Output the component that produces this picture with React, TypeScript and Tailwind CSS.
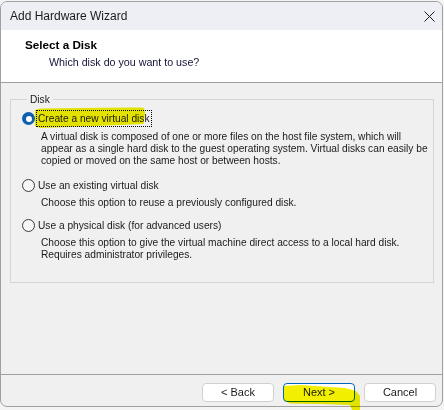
import React from "react";

function Radio({ checked }: { checked?: boolean }) {
  if (checked) {
    return (
      <span className="w-[13px] h-[13px] shrink-0 rounded-full bg-[#0f5fae] flex items-center justify-center">
        <span className="w-[6px] h-[6px] rounded-full bg-white" />
      </span>
    );
  }
  return <span className="w-[13px] h-[13px] shrink-0 rounded-full border border-[#3c3c3c] bg-[#f6f6f6]" />;
}

export default function App() {
  return (
    <div className="relative w-[444px] h-[410px] bg-[#f4f4f4] overflow-hidden font-['Liberation_Sans',Arial,sans-serif] text-[#1a1a1a]">
      <div className="mt-[1px] w-[443px] h-[406px] border border-[#a0a0a0] rounded-[7px] overflow-hidden flex flex-col bg-[#f0f0f0]">
        {/* Title bar */}
        <div className="h-[28px] shrink-0 bg-[#eeeef5] flex items-center justify-between pl-[9px] pr-[7px]">
          <span className="text-[12px] leading-[14px] text-[#1b1b1b]">Add Hardware Wizard</span>
          <svg width="11" height="11" viewBox="0 0 11 11">
            <path d="M0.5 0.5L10.5 10.5M10.5 0.5L0.5 10.5" stroke="#1b1b1b" strokeWidth="1" fill="none" />
          </svg>
        </div>
        {/* Header */}
        <div className="h-[53px] shrink-0 bg-white border-b border-[#a0a0a0] pt-[8px]">
          <div className="pl-[24px] text-[11.7px] font-bold leading-[14px] text-black">Select a Disk</div>
          <div className="pl-[48px] mt-[3px] text-[10.7px] leading-[14px] text-[#14143a]">
            Which disk do you want to use?
          </div>
        </div>
        {/* Body */}
        <div className="flex-1 pl-[9px] pr-[8px] pt-[10px]">
          <fieldset className="border border-[#d5d5d5] h-[190px] pl-[11px] pt-[4px] text-[10.2px]">
            <legend className="ml-[5px] px-[3px] text-[10.2px] leading-[13px]">Disk</legend>
            <div className="flex items-center h-[17px]">
              <Radio checked />
              <span className="ml-[1px] border border-dotted border-black px-[1px] leading-[15px] whitespace-nowrap">
                Create a new virtual disk
              </span>
            </div>
            <div className="mt-[4px] pl-[19px] leading-[12px] whitespace-nowrap">
              A virtual disk is composed of one or more files on the host file system, which will
              <br />
              appear as a single hard disk to the guest operating system. Virtual disks can easily be
              <br />
              copied or moved on the same host or between hosts.
            </div>
            <div className="mt-[10px] flex items-center h-[17px]">
              <Radio />
              <span className="ml-[1px] border border-transparent px-[1px] leading-[15px] whitespace-nowrap">
                Use an existing virtual disk
              </span>
            </div>
            <div className="mt-[3px] pl-[19px] leading-[12px] whitespace-nowrap">
              Choose this option to reuse a previously configured disk.
            </div>
            <div className="mt-[8px] flex items-center h-[17px]">
              <Radio />
              <span className="ml-[1px] border border-transparent px-[1px] leading-[15px] whitespace-nowrap">
                Use a physical disk (for advanced users)
              </span>
            </div>
            <div className="mt-[3px] pl-[19px] leading-[12px] whitespace-nowrap">
              Choose this option to give the virtual machine direct access to a local hard disk.
              <br />
              Requires administrator privileges.
            </div>
          </fieldset>
        </div>
        {/* Footer */}
        <div className="h-[32px] shrink-0 border-t border-[#a0a0a0] flex justify-end gap-[9px] pr-[6px] pt-[8px]">
          <button className="w-[72px] h-[19px] bg-white border border-[#d0d0d0] rounded-[4px] text-[11px] leading-none text-[#1b1b1b]">
            &lt; Back
          </button>
          <button className="w-[72px] h-[19px] bg-white border border-[#0067c0] rounded-[4px] text-[11px] leading-none text-[#1b1b1b]">
            Next &gt;
          </button>
          <button className="w-[72px] h-[19px] bg-white border border-[#d0d0d0] rounded-[4px] text-[11px] leading-none text-[#1b1b1b]">
            Cancel
          </button>
        </div>
      </div>
      {/* Highlighter overlay */}
      <svg
        className="absolute left-0 top-0 pointer-events-none mix-blend-multiply"
        width="444"
        height="410"
        viewBox="0 0 444 410"
      >
        <path
          d="M35 110 L40 108.5 L100 107.8 L140 107.5 L144 108 L145 113 L143.5 124 L120 125 L70 127 L40 128 L35 126 Z"
          fill="#f2ef00"
        />
        <path
          d="M284 386 L300 385 L345 388 L356 391 L360 396 L360 410 L352 410 L350 405 L320 404 L290 403.5 L284 400 Z"
          fill="#f2ef00"
        />
      </svg>
    </div>
  );
}
